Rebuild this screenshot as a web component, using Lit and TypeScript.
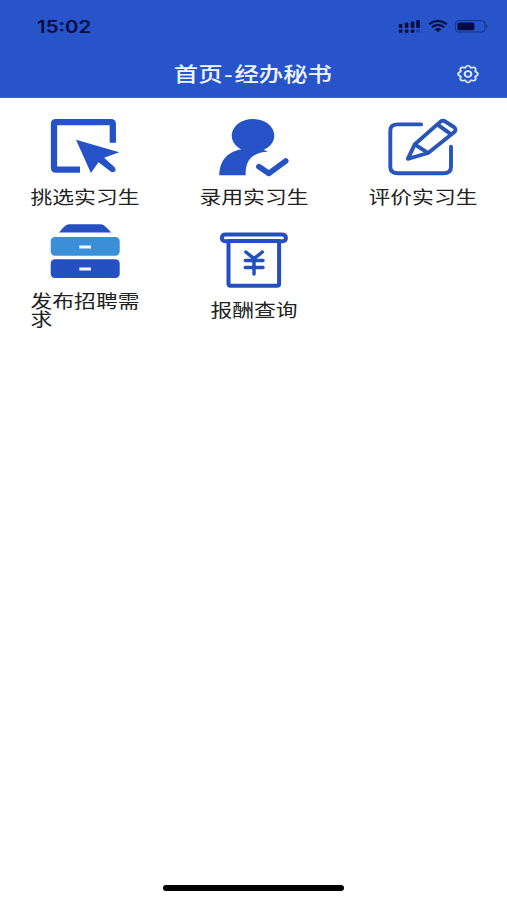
import { LitElement, html, css, svg } from "lit";
import { customElement } from "lit/decorators.js";

const icons = {
  pick: svg`
    <path d="M63.3 24.7V6Q63.3 4.1 61.3 4.1H6.5Q4.5 4.1 4.5 6V49.5Q4.5 51.6 6.5 51.6H30.5" fill="none" stroke="#2552c6" stroke-width="6.3"/>
    <path d="M26.5 21.8L69.8 34.2L54.6 39.8L65.4 49.6Q67.6 54.4 62.2 54.2L49 44.2L41.4 54.9Z" fill="#2552c6"/>`,
  hire: svg`
    <ellipse cx="34.5" cy="17.6" rx="21.3" ry="16.6" fill="#2552c6"/>
    <path d="M.8 57.3C1 44.5 7 34 23 31.2L34 26L43.5 31Q46 32.4 49.5 33.7C34 34.3 26.5 42.5 27.2 57.3Z" fill="#2552c6"/>
    <path d="M40.4 48.6L50.3 55.4L67.2 43" fill="none" stroke="#2552c6" stroke-width="5.6" stroke-linecap="round" stroke-linejoin="round"/>`,
  review: svg`
    <g fill="none" stroke="#2a55b8" stroke-width="3.9" stroke-linecap="round" stroke-linejoin="round">
      <path d="M33.6 6.4H10.5Q2.8 6.4 2.8 12.5V49Q2.8 55.2 10.5 55.2H56Q63.5 55.2 63.5 49V28.8"/>
      <path d="M20.3 40.8L27.4 26.2L51.8 4.6Q55 1.6 58.3 3.8L66.4 9Q69.6 11.4 66.6 14.2L40.6 35Z"/>
      <path d="M28 26.8L40 34.6M50.4 6.8L62.6 15.6"/>
    </g>`,
  publish: svg`
    <path d="M9.5 10.5Q14.5 4 17 2.9Q18 2.3 20 2.3H50.5Q53 2.3 54.3 3.2Q57 5 61.7 10.5Z" fill="#2450c2"/>
    <rect x="1.2" y="15" width="69" height="18.8" rx="4.2" fill="#3b8fd8"/>
    <rect x="1.2" y="37.3" width="69" height="18.8" rx="4.2" fill="#2450c2"/>
    <path d="M29.8 25H41.5M29.8 47H41.5" stroke="#f3faff" stroke-width="3"/>`,
  reward: svg`
    <g fill="none" stroke="#2450bf" stroke-width="4" stroke-linecap="round" stroke-linejoin="round">
      <path d="M9 10.2H7Q3.4 9.9 3.4 6.9Q3.4 3.5 7.5 3.5H63Q67.4 3.5 67.4 6.9Q67.4 9.9 64 10.2H61"/>
      <path d="M10 10H60.6V52.8Q60.6 54.8 58.6 54.8H12Q10 54.8 10 52.8Z"/>
      <path d="M27.4 21L35.5 27.6L43.8 21M26.8 29.5H44.5M26.8 36.5H44.5M35.5 28V43" stroke-width="3.5"/>
    </g>`,
};

const rows = [
  [
    { icon: icons.pick, label: "挑选实习生" },
    { icon: icons.hire, label: "录用实习生" },
    { icon: icons.review, label: "评价实习生" },
  ],
  [
    { icon: icons.publish, label: "发布招聘需求" },
    { icon: icons.reward, label: "报酬查询" },
  ],
];

@customElement("app-root")
export class AppRoot extends LitElement {
  static styles = css`
    :host {
      display: flex;
      flex-direction: column;
      height: 900px;
      background: #fff;
      font-family: "Noto Sans CJK SC", sans-serif;
    }
    svg { display: block; flex: none; }
    header {
      height: 98px;
      box-sizing: border-box;
      background: #2754c9;
      border-bottom: 1px solid #4169c4;
    }
    .status {
      height: 52px;
      display: flex;
      align-items: center;
      justify-content: space-between;
      padding: 0 19px 0 37px;
      color: #050c42;
    }
    .time {
      padding-top: 2px;
      font: 600 17px/20px Inter, sans-serif;
      transform: scaleX(1.2);
      transform-origin: left;
    }
    .nav {
      height: 44px;
      display: grid;
      grid-template-columns: 1fr auto 1fr;
      align-items: center;
      color: #f1f5ff;
    }
    .title {
      grid-column: 2;
      margin: 0 1px 0 0;
      font-size: 20px;
      line-height: 24px;
      font-weight: 500;
      white-space: nowrap;
      transform: scaleX(1.22);
    }
    .dash { padding: 0 1.3px; }
    .gear { justify-self: end; margin-right: 27px; }
    main {
      flex: 1;
      padding-top: 20px;
      display: flex;
      flex-direction: column;
      gap: 16px;
    }
    .row {
      display: grid;
      grid-template-columns: repeat(3, 1fr);
      align-items: center;
    }
    .item {
      display: flex;
      flex-direction: column;
      align-items: center;
      gap: 9px;
      padding-bottom: 1px;
    }
    .label {
      max-width: 90px;
      font-size: 18px;
      line-height: 18px;
      color: #222;
      transform: scaleX(1.21);
    }
    .home {
      width: 181px;
      height: 6px;
      border-radius: 3px;
      background: #000;
      margin: 0 auto 9px;
    }
  `;

  render() {
    return html`
      <header>
        <div class="status">
          <span class="time">15:02</span>
          <svg width="90" height="16" viewBox="398 18 90 16">
            <g fill="#050c42">
              <rect x="398.8" y="24" width="3.6" height="4" rx="1"/>
              <rect x="404.8" y="22.6" width="3.6" height="5.4" rx="1"/>
              <rect x="410.8" y="21.4" width="3.6" height="6.6" rx="1"/>
              <rect x="416.2" y="20" width="3.6" height="8" rx="1"/>
              <rect x="398.8" y="29.4" width="3.6" height="3.4" rx="1"/>
              <rect x="404.8" y="29.4" width="3.6" height="3.4" rx="1"/>
              <rect x="410.8" y="29.4" width="3.6" height="3.4" rx="1"/>
              <rect x="416.2" y="29.4" width="3.6" height="3.4" rx="1" opacity=".3"/>
              <path d="M434.6 29.2Q438 26.9 441.4 29.2L438 31.9Z"/>
              <rect x="457.4" y="22.4" width="17" height="7.8" rx="1.6"/>
              <path d="M486.4 24.2Q488.6 26.2 486.4 28.2Z" opacity=".6"/>
            </g>
            <g fill="none" stroke="#050c42">
              <path d="M429.2 24.2Q438 17.6 446.8 24.2M432 27.1Q438 22.6 444 27.1" stroke-width="2.3"/>
              <rect x="455.4" y="20.6" width="29.6" height="11.4" rx="3.2" opacity=".45"/>
            </g>
          </svg>
        </div>
        <div class="nav">
          <h1 class="title">首页<span class="dash">-</span>经办秘书</h1>
          <svg class="gear" width="24" height="20" viewBox="-12 -10 24 20">
            <g fill="none" stroke="#dfe9ff" stroke-width="1.7" stroke-linejoin="round" transform="scale(1.17 1)">
              <path d="M6.2 -2.57Q10.8 0 6.2 2.57Q7.8 7.8 2.57 6.2Q0 10.8 -2.57 6.2Q-7.8 7.8 -6.2 2.57Q-10.8 0 -6.2 -2.57Q-7.8 -7.8 -2.57 -6.2Q0 -10.8 2.57 -6.2Q7.8 -7.8 6.2 -2.57Z"/>
              <circle r="2.9"/>
            </g>
          </svg>
        </div>
      </header>
      <main>
        ${rows.map(
          (row) => html`<div class="row">
            ${row.map(
              (item) => html`<div class="item">
                <svg width="71" height="60" viewBox="-.5 0 71 60">${item.icon}</svg>
                <span class="label">${item.label}</span>
              </div>`
            )}
          </div>`
        )}
      </main>
      <div class="home"></div>
    `;
  }
}
